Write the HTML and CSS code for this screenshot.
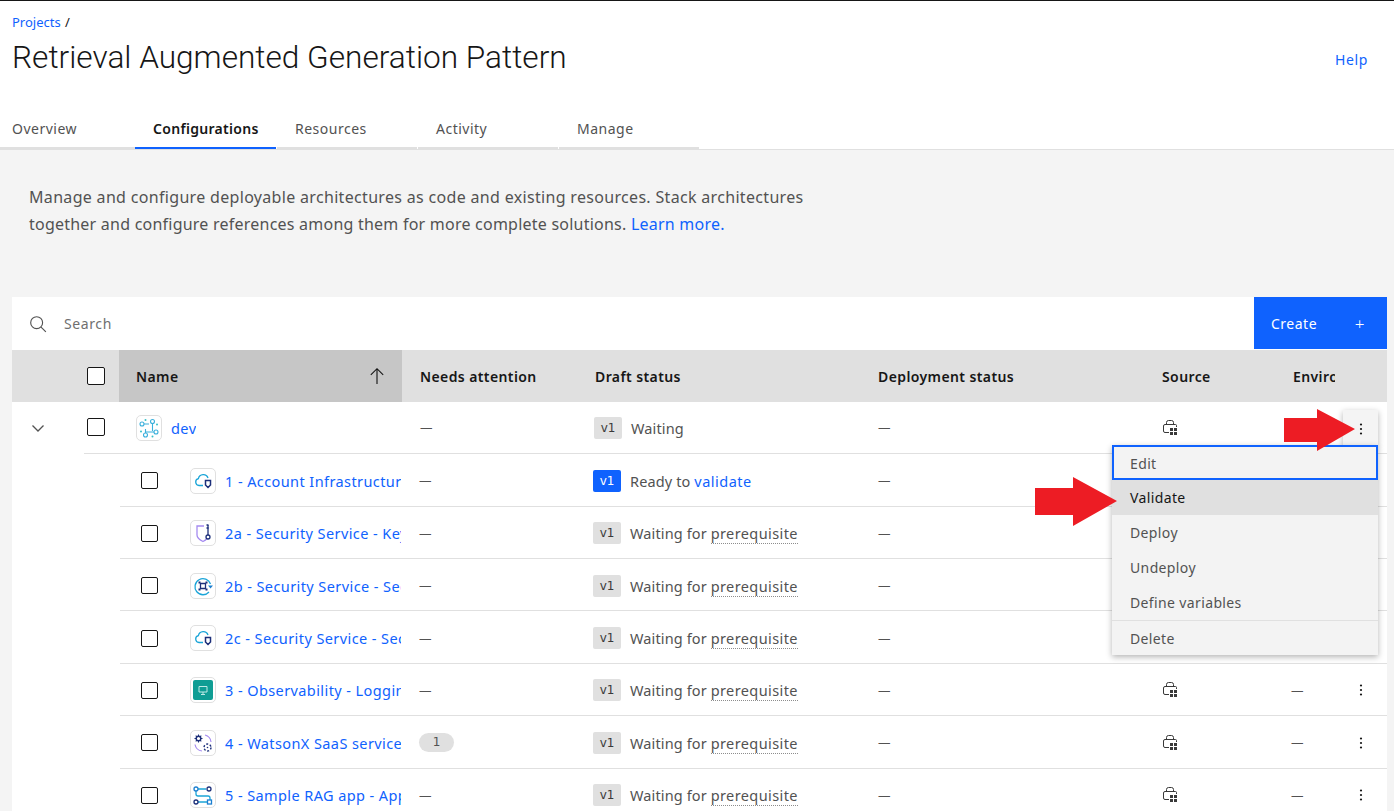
FILE: index.html
```html
<!DOCTYPE html>
<html lang="en">
<head>
<meta charset="utf-8">
<title>Retrieval Augmented Generation Pattern</title>
<link rel="stylesheet" href="styles.css">
</head>
<body>
<svg class="defs" width="0" height="0" aria-hidden="true">
  <symbol id="src" viewBox="0 0 16 16">
    <path d="M7 12.500H3a1.500 1.500 0 0 1-1.500-1.500V6A1.500 1.500 0 0 1 3 4.500h10.500a1 1 0 0 1 1 1V7" fill="none" stroke="currentColor" stroke-width="1"/>
    <path d="M4.500 4.500v-2a2 2 0 0 1 2-2h3a2 2 0 0 1 2 2v2" fill="none" stroke="currentColor" stroke-width="1"/>
    <path d="M8 8h2.500v2.500H8zM12 8h2.500v2.500H12zM8 12h2.500v2.500H8zM12 12h2.500v2.500H12z" fill="currentColor" shape-rendering="crispEdges"/>
  </symbol>
  <symbol id="kebab" viewBox="0 0 16 16">
    <circle cx="8" cy="3.500" r="1.100" fill="currentColor"/><circle cx="8" cy="8" r="1.100" fill="currentColor"/><circle cx="8" cy="12.500" r="1.100" fill="currentColor"/>
  </symbol>
  <symbol id="cloud" viewBox="0 0 26 26">
    <path d="M13 17.500H9a3.500 3.500 0 0 1-.6-6.900A5 5 0 0 1 18 10" fill="none" stroke="#1ba5d8" stroke-width="1.300"/>
    <path d="M15.500 12.500h5v4.500l-2.500 2.500-2.500-2.500z" fill="none" stroke="#1c2f7a" stroke-width="1.500"/>
  </symbol>
</svg>

<header class="page-head">
  <div class="crumbs"><a href="#">Projects</a> <span>/</span></div>
  <div class="title-row">
    <h1>Retrieval Augmented Generation Pattern</h1>
    <a class="help" href="#">Help</a>
  </div>
  <nav class="tabs">
    <a class="tab tab-first" href="#">Overview</a>
    <a class="tab tab-on" href="#">Configurations</a>
    <a class="tab" href="#">Resources</a>
    <a class="tab" href="#">Activity</a>
    <a class="tab" href="#">Manage</a>
  </nav>
</header>

<main class="main">
  <p class="intro">Manage and configure deployable architectures as code and existing resources. Stack architectures <span class="intro-tail">together and configure references among them for more complete solutions. <a href="#">Learn more.</a></span></p>

  <section class="table">
    <div class="toolbar">
      <div class="search">
        <svg class="search-icon" viewBox="0 0 16 16" width="18" height="18"><circle cx="6.800" cy="6.800" r="5.300" fill="none" stroke="#525252" stroke-width="1"/><path d="M10.700 10.700L15 15" stroke="#525252" stroke-width="1"/></svg>
        <span>Search</span>
      </div>
      <a class="create" href="#"><span>Create</span><span class="plus">+</span></a>
    </div>

    <div class="thead">
      <div class="th-select"><span class="check"></span></div>
      <div class="th th-name"><span>Name</span>
        <svg viewBox="0 0 16 16" width="18" height="18"><path d="M8 15V1.500M2.500 7L8 1.500 13.500 7" fill="none" stroke="#161616" stroke-width="1"/></svg>
      </div>
      <div class="th">Needs attention</div>
      <div class="th">Draft status</div>
      <div class="th">Deployment status</div>
      <div class="th">Source</div>
      <div class="th th-env"><span>Environment</span></div>
      <div></div>
    </div>

    <div class="row row-parent">
      <div class="gutter gutter-parent">
        <svg viewBox="0 0 16 16" width="16" height="16"><path d="M2.500 5.500L8 11l5.500-5.500" fill="none" stroke="#525252" stroke-width="1.300"/></svg>
      </div>
      <div class="cells cells-parent">
        <div class="cell-check"><span class="check"></span></div>
        <div class="cell-name">
          <span class="logo logo-dev">
            <svg viewBox="0 0 26 26" width="26" height="26"><g fill="none" stroke="#3ab0dc" stroke-width="1.100"><circle cx="6" cy="9" r="2"/><circle cx="16.500" cy="6.500" r="2"/><circle cx="20" cy="17" r="2"/><circle cx="9.500" cy="20" r="2"/><path d="M8 9h5M16.500 8.500V16M18 17h-8M9.500 18v-4"/></g><g fill="#36c0c8"><circle cx="9.500" cy="5" r="1"/><circle cx="21" cy="9.500" r="1"/><circle cx="5" cy="16.500" r="1"/><circle cx="16.500" cy="21.500" r="1"/></g></svg>
          </span>
          <a class="name name-parent" href="#">dev</a>
        </div>
        <div class="cell-dash">—</div>
        <div class="cell-status"><span class="tag">v1</span><span class="st">Waiting</span></div>
        <div class="cell-dash">—</div>
        <div class="cell-src"><svg class="src" width="16" height="16"><use href="#src"/></svg></div>
        <div></div>
        <div></div>
      </div>
    </div>

    <div class="row">
      <div class="gutter"></div>
      <div class="cells">
        <div class="cell-check2"><span class="check check-sm"></span></div>
        <div class="cell-name"><span class="logo"><svg viewBox="0 0 26 26" width="26" height="26"><use href="#cloud"/></svg></span><a class="name" href="#">1 - Account Infrastructure - Landing Zone</a></div>
        <div class="cell-dash cell-dash2">—</div>
        <div class="cell-status cell-status2"><span class="tag tag-blue">v1</span><span class="st">Ready to <a href="#">validate</a></span></div>
        <div class="cell-dash">—</div>
        <div class="cell-src"><svg class="src" width="16" height="16"><use href="#src"/></svg></div>
        <div class="cell-env">—</div>
        <div class="cell-act"><svg class="kb" width="16" height="16"><use href="#kebab"/></svg></div>
      </div>
    </div>

    <div class="row">
      <div class="gutter"></div>
      <div class="cells">
        <div class="cell-check2"><span class="check check-sm"></span></div>
        <div class="cell-name"><span class="logo"><svg viewBox="0 0 26 26" width="26" height="26"><path d="M14 6H7v9c0 3 3 5 6 6.500 1.500-.7 3-1.700 4-3" fill="none" stroke="#a58bf0" stroke-width="1.300"/><path d="M18 5v10" stroke="#1c2f7a" stroke-width="1.300"/><path d="M16.500 5h2M16.500 8h2" stroke="#1c2f7a" stroke-width="1.300"/><circle cx="18" cy="17" r="2" fill="none" stroke="#1c2f7a" stroke-width="1.300"/></svg></span><a class="name" href="#">2a - Security Service - Key Management</a></div>
        <div class="cell-dash cell-dash2">—</div>
        <div class="cell-status cell-status2"><span class="tag">v1</span><span class="st">Waiting for <u>prerequisite</u></span></div>
        <div class="cell-dash">—</div>
        <div class="cell-src"><svg class="src" width="16" height="16"><use href="#src"/></svg></div>
        <div class="cell-env">—</div>
        <div class="cell-act"><svg class="kb" width="16" height="16"><use href="#kebab"/></svg></div>
      </div>
    </div>

    <div class="row">
      <div class="gutter"></div>
      <div class="cells">
        <div class="cell-check2"><span class="check check-sm"></span></div>
        <div class="cell-name"><span class="logo"><svg viewBox="0 0 26 26" width="26" height="26"><path d="M20.500 11A8 8 0 1 0 19 19" fill="none" stroke="#1ba5d8" stroke-width="1.300"/><path d="M18 12.500h5l-2.500 3z" fill="#1c7fd0"/><path d="M10.500 10.500h5v5h-5z" fill="none" stroke="#1c2f7a" stroke-width="1.300"/><path d="M8.500 8.500h2v2h-2zM15.500 8.500h2v2h-2zM8.500 15.500h2v2h-2zM15.500 15.500h2v2h-2z" fill="#1c2f7a"/></svg></span><a class="name" href="#">2b - Security Service - Secrets Manager</a></div>
        <div class="cell-dash cell-dash2">—</div>
        <div class="cell-status cell-status2"><span class="tag">v1</span><span class="st">Waiting for <u>prerequisite</u></span></div>
        <div class="cell-dash">—</div>
        <div class="cell-src"><svg class="src" width="16" height="16"><use href="#src"/></svg></div>
        <div class="cell-env">—</div>
        <div class="cell-act"><svg class="kb" width="16" height="16"><use href="#kebab"/></svg></div>
      </div>
    </div>

    <div class="row">
      <div class="gutter"></div>
      <div class="cells">
        <div class="cell-check2"><span class="check check-sm"></span></div>
        <div class="cell-name"><span class="logo"><svg viewBox="0 0 26 26" width="26" height="26"><use href="#cloud"/></svg></span><a class="name" href="#">2c - Security Service - Security and Compliance</a></div>
        <div class="cell-dash cell-dash2">—</div>
        <div class="cell-status cell-status2"><span class="tag">v1</span><span class="st">Waiting for <u>prerequisite</u></span></div>
        <div class="cell-dash">—</div>
        <div class="cell-src"><svg class="src" width="16" height="16"><use href="#src"/></svg></div>
        <div class="cell-env">—</div>
        <div class="cell-act"><svg class="kb" width="16" height="16"><use href="#kebab"/></svg></div>
      </div>
    </div>

    <div class="row">
      <div class="gutter"></div>
      <div class="cells">
        <div class="cell-check2"><span class="check check-sm"></span></div>
        <div class="cell-name"><span class="logo"><svg viewBox="0 0 26 26" width="26" height="26"><rect x="3" y="3" width="20" height="20" rx="2" fill="#0f9d94"/><path d="M9 9.500h8v5.500H9zM13 15v2M11 17.500h4" fill="none" stroke="#bfeae6" stroke-width="1"/></svg></span><a class="name" href="#">3 - Observability - Logging and Monitoring</a></div>
        <div class="cell-dash cell-dash2">—</div>
        <div class="cell-status cell-status2"><span class="tag">v1</span><span class="st">Waiting for <u>prerequisite</u></span></div>
        <div class="cell-dash">—</div>
        <div class="cell-src"><svg class="src" width="16" height="16"><use href="#src"/></svg></div>
        <div class="cell-env">—</div>
        <div class="cell-act"><svg class="kb" width="16" height="16"><use href="#kebab"/></svg></div>
      </div>
    </div>

    <div class="row">
      <div class="gutter"></div>
      <div class="cells">
        <div class="cell-check2"><span class="check check-sm"></span></div>
        <div class="cell-name"><span class="logo"><svg viewBox="0 0 26 26" width="26" height="26"><circle cx="8.500" cy="8.500" r="2.300" fill="none" stroke="#1c2f7a" stroke-width="1.400"/><path d="M8.500 4.500v1.700M8.500 10.800v1.700M4.500 8.500h1.700M10.800 8.500h1.700M5.700 5.700l1.200 1.200M10.100 10.100l1.200 1.200M11.300 5.700l-1.200 1.200M6.900 10.100l-1.200 1.200" stroke="#1c2f7a" stroke-width="1.100"/><path d="M15 5a8 8 0 0 1 6 7M5 14.500a8 8 0 0 0 7 6.500" fill="none" stroke="#a58bf0" stroke-width="1.200"/><circle cx="17.500" cy="17.500" r="3.500" fill="none" stroke="#1c2f7a" stroke-width="1.400" stroke-dasharray="2 1.700"/><circle cx="17.500" cy="17.500" r=".8" fill="#1c2f7a"/></svg></span><a class="name" href="#">4 - WatsonX SaaS services</a></div>
        <div class="cell-pill"><span class="pill">1</span></div>
        <div class="cell-status cell-status2"><span class="tag">v1</span><span class="st">Waiting for <u>prerequisite</u></span></div>
        <div class="cell-dash">—</div>
        <div class="cell-src"><svg class="src" width="16" height="16"><use href="#src"/></svg></div>
        <div class="cell-env">—</div>
        <div class="cell-act"><svg class="kb" width="16" height="16"><use href="#kebab"/></svg></div>
      </div>
    </div>

    <div class="row">
      <div class="gutter"></div>
      <div class="cells">
        <div class="cell-check2"><span class="check check-sm"></span></div>
        <div class="cell-name"><span class="logo"><svg viewBox="0 0 26 26" width="26" height="26"><g fill="none" stroke-width="1.300"><path d="M8 7h8M6 9v3a2 2 0 0 0 2 2h10a2 2 0 0 1 2 2v2M8 20h9" stroke="#1ba5d8"/><circle cx="6" cy="7" r="2" stroke="#1c7fd0"/><circle cx="19" cy="7" r="2" stroke="#1c2f7a"/><circle cx="6" cy="20" r="2" stroke="#1c2f7a"/><rect x="17.500" y="18" width="4" height="4" stroke="#1c7fd0"/></g></svg></span><a class="name" href="#">5 - Sample RAG app - App Configuration</a></div>
        <div class="cell-dash cell-dash2">—</div>
        <div class="cell-status cell-status2"><span class="tag">v1</span><span class="st">Waiting for <u>prerequisite</u></span></div>
        <div class="cell-dash">—</div>
        <div class="cell-src"><svg class="src" width="16" height="16"><use href="#src"/></svg></div>
        <div class="cell-env">—</div>
        <div class="cell-act"><svg class="kb" width="16" height="16"><use href="#kebab"/></svg></div>
      </div>
    </div>
  </section>
</main>

<div class="menu-btn"><svg class="kb" width="16" height="16"><use href="#kebab"/></svg></div>
<ul class="menu">
  <li class="mi mi-focus">Edit</li>
  <li class="mi mi-hover">Validate</li>
  <li class="mi">Deploy</li>
  <li class="mi">Undeploy</li>
  <li class="mi mi-define">Define variables</li>
  <li class="mi mi-delete">Delete</li>
</ul>

<svg class="arrow arrow-a" width="72" height="42" viewBox="0 0 72 42"><path d="M1 9h33V0l38 20-38 22V33H1z" fill="#ed1c24"/></svg>
<svg class="arrow arrow-b" width="83" height="49" viewBox="0 0 83 49"><path d="M1 11h38V0l44 24-44 25V38H1z" fill="#ed1c24"/></svg>
</body>
</html>
```

FILE: styles.css
```css
* { box-sizing: border-box; }
html, body { margin: 0; height: 811px; overflow: hidden; }
body {
  background: #f4f4f4;
  color: #161616;
  font-family: "Noto Sans", "Liberation Sans", sans-serif;
  font-size: 14px;
  position: relative;
}
a { color: #0f62fe; text-decoration: none; }
.defs { position: absolute; }

.page-head {
  background: #fff;
  border-top: 1px solid #161616;
  border-bottom: 1px solid #e0e0e0;
  height: 150px;
}
.crumbs { padding: 13px 12px 0; font-size: 13px; line-height: 17px; word-spacing: 1px; }
.title-row { display: flex; justify-content: space-between; align-items: center; padding: 7px 26px 0 12px; }
h1 { margin: 0; font-family: Roboto, sans-serif; font-weight: 300; font-size: 31.6px; line-height: 40px; }
.help { font-size: 14px; letter-spacing: .6px; position: relative; top: 1px; }
.tabs { display: flex; margin-top: 31px; height: 40px; }
.tab {
  width: 140px;
  margin-right: 1px;
  padding: 6px 0 0 18px;
  color: #525252;
  font-size: 14px;
  letter-spacing: .5px;
  line-height: 28px;
  border-bottom: 2px solid #e0e0e0;
}
.tab-first { width: 135px; margin-right: 0; padding-left: 12px; }
.tab-on { color: #161616; font-weight: 600; border-bottom-color: #0f62fe; width: 141px; letter-spacing: .3px; }

.main { padding: 34px 7px 0 12px; }
.intro {
  margin: 0 0 59px 17px;
  width: 800px;
  font-size: 16px;
  letter-spacing: .32px;
  line-height: 27px;
  color: #525252;
}
.intro-tail { letter-spacing: .23px; }
.toolbar { display: flex; height: 53px; background: #fff; }
.search { flex: 1; display: flex; align-items: center; padding-left: 17px; gap: 17px; color: #6f6f6f; font-size: 14px; letter-spacing: .6px; }
.create {
  width: 133px;
  height: 52px;
  background: #0f62fe;
  color: #fff;
  display: flex;
  align-items: center;
  justify-content: space-between;
  padding: 0 22px 0 17px;
  font-size: 14px;
  letter-spacing: .5px;
}
.plus { font-size: 17px; font-weight: 300; }

.thead {
  display: grid;
  grid-template-columns: 107px 283px 175px 283px 284px 131px 60px 52px;
  height: 52px;
  background: #e0e0e0;
  font-weight: 600;
  letter-spacing: .4px;
}
.th { display: flex; align-items: center; padding-left: 18px; white-space: nowrap; overflow: hidden; }
.th-select { display: flex; align-items: center; padding-left: 75px; }
.th-name { background: #c6c6c6; justify-content: space-between; padding-left: 17px; padding-right: 16px; }
.th-env span { display: block; overflow: hidden; }

.row { display: flex; height: 52.4px; background: #fff; }
.row-parent { height: 52.2px; }
.gutter { width: 108px; flex: none; }
.gutter-parent { width: 72px; padding: 18px 0 0 18px; }
.cells {
  flex: 1;
  min-width: 0;
  display: grid;
  grid-template-columns: 70px 212px 175px 283px 284px 131px 60px 52px;
  align-items: center;
  padding-top: 2px;
  border-bottom: 1px solid #e0e0e0;
  font-size: 14.5px;
}
.cells-parent { grid-template-columns: 35px 283px 175px 283px 284px 131px 60px 52px; padding-top: 0; }

.check { display: block; width: 18px; height: 18px; border: 1px solid #161616; border-radius: 2px; background: #fff; }
.check-sm { width: 17px; height: 17px; }
.cell-check { padding-left: 3px; margin-top: -2px; }
.cell-check2 { padding-left: 21px; }

.cell-name { display: flex; align-items: center; min-width: 0; padding-right: 1px; }
.cells-parent .cell-name { padding-left: 17px; }
.logo {
  flex: none;
  width: 26px;
  height: 26px;
  background: #fff;
  border: 1px solid #e0e0e0;
  border-radius: 5px;
  display: block;
  overflow: hidden;
}
.logo svg { display: block; margin: -1px; }
.name { margin-left: 9px; white-space: nowrap; overflow: hidden; min-width: 0; letter-spacing: .41px; }
.cell-dash { padding-left: 18px; color: #525252; font-size: 12.5px; }
.cell-dash2 { padding-left: 17px; }
.cell-pill { padding-left: 17px; }
.pill {
  display: block;
  width: 35px;
  height: 19px;
  border-radius: 10px;
  background: #e0e0e0;
  color: #525252;
  font-family: "DejaVu Sans", sans-serif;
  font-size: 12px;
  line-height: 19px;
  text-align: center;
}
.cell-status { display: flex; align-items: center; padding-left: 17px; }
.cell-status2 { padding-left: 16px; }
.tag {
  width: 28px;
  height: 22px;
  background: #e0e0e0;
  color: #393939;
  border-radius: 2px;
  font-family: "DejaVu Sans", sans-serif;
  font-size: 12px;
  line-height: 22px;
  text-align: center;
}
.tag-blue { background: #0f62fe; color: #fff; }
.st { margin-left: 9px; color: #525252; white-space: nowrap; letter-spacing: .12px; }
.st u { text-decoration: none; border-bottom: 1px dotted #8d8d8d; letter-spacing: .4px; }
.st a { letter-spacing: .5px; }
.cell-src { padding-left: 18px; color: #393939; line-height: 0; }
.cell-env { padding-left: 16px; color: #525252; font-size: 12.5px; }
.cell-act { padding-left: 18px; line-height: 0; }
.kb { color: #161616; }

.menu-btn {
  position: absolute;
  left: 1343px;
  top: 410px;
  width: 35px;
  height: 36px;
  background: #f4f4f4;
  box-shadow: 0 2px 6px rgba(0,0,0,.3);
  display: flex;
  align-items: center;
  justify-content: center;
  padding-top: 2px;
}
.menu {
  position: absolute;
  left: 1112px;
  top: 445px;
  width: 266px;
  height: 210px;
  margin: 0;
  padding: 0;
  list-style: none;
  background: #f3f3f3;
  box-shadow: 0 2px 6px rgba(0,0,0,.3);
  letter-spacing: .37px;
}
.mi { height: 35px; padding-left: 18px; line-height: 35px; color: #525252; }
.mi-focus { outline: 2px solid #0f62fe; outline-offset: -2px; padding-top: 1px; }
.mi-hover { background: #e0e0e0; color: #161616; }
.mi-delete { border-top: 1px solid #e0e0e0; }
.arrow { position: absolute; }
.arrow-a { left: 1283px; top: 409px; }
.arrow-b { left: 1034px; top: 477px; }
```
